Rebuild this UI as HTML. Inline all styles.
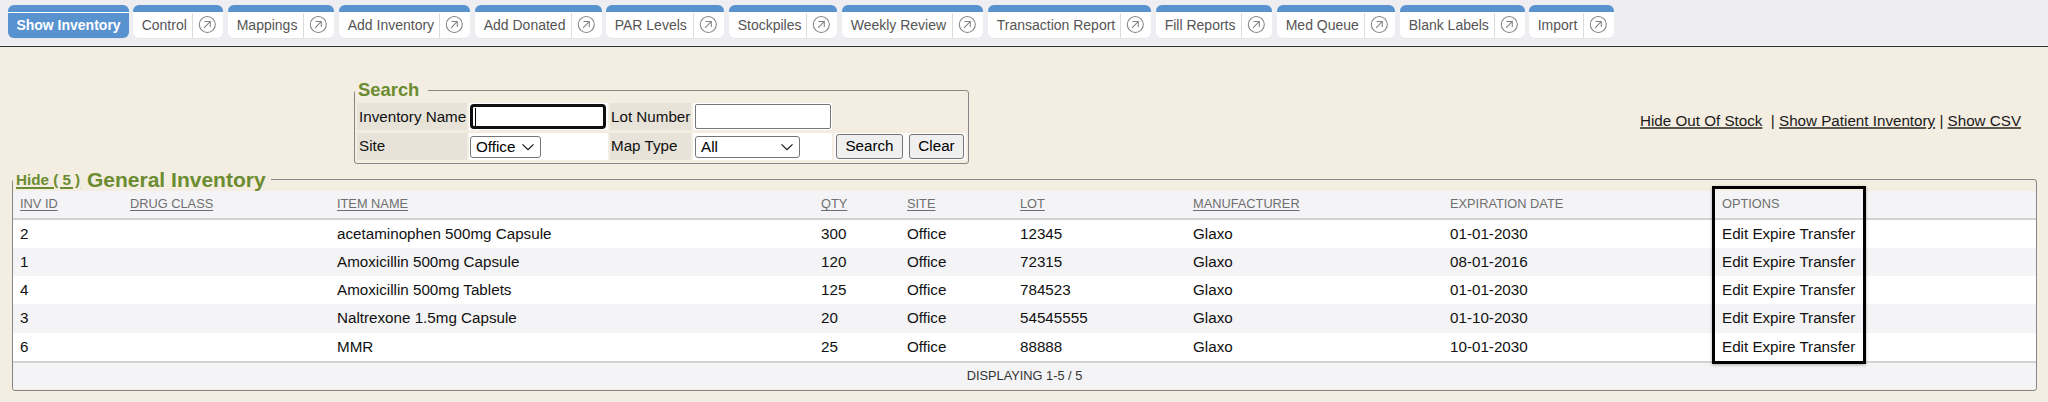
<!DOCTYPE html>
<html><head><meta charset="utf-8">
<style>
*{box-sizing:border-box;margin:0;padding:0}
html,body{width:2048px;height:402px;overflow:hidden}
body{background:#f4ede1;font-family:"Liberation Sans",sans-serif;position:relative;color:#222}
#hdr{position:absolute;left:0;top:0;width:2048px;height:46px;background:#eeedf2;border-bottom:1px solid #f5f4f8}
#hdrline{position:absolute;left:0;top:46px;width:2048px;height:1px;background:#333}
#tabs{position:absolute;left:0;top:0}
.tab{position:absolute;top:5px;height:33px;border-radius:6px;background:#fff;border-top:7px solid #5892cf;box-shadow:0 1px 1px rgba(0,0,0,0.04)}
.tab .tt{position:absolute;left:8.7px;top:0;font-size:14px;line-height:26px;color:#555;white-space:pre}
.tab .sep{position:absolute;right:30px;top:1px;width:1px;height:25px;background:#dcdcdc}
.tab .ic{position:absolute;right:0;top:0;display:block}
.tab.active{background:#5892cf}
.tab.active .tt{left:0;right:0;text-align:center;color:#fff;font-weight:bold;border-top:1px solid #fff;line-height:25px}
.fs{position:absolute;border:1px solid #878787;border-radius:3px}
.lg{position:absolute;background:#f4ede1;color:#6b8c30;font-weight:bold;white-space:pre;line-height:1}
.lab{position:absolute;background:#e7e3d9;font-size:15.2px;line-height:15px;padding-left:2px;white-space:pre;color:#111}
.wc{position:absolute;background:#fff}
.inp{position:absolute;background:#fff;border:1px solid #767676;border-radius:2px}
.sel{position:absolute;background:#fff;border:1px solid #767676;border-radius:3px;font-size:15.2px;line-height:15px;color:#000}
.btn{position:absolute;background:#efefef;border:1px solid #767676;border-radius:3px;font-size:15.2px;line-height:15px;color:#000;text-align:center}
.txt{position:absolute;white-space:pre;line-height:1}
.th{position:absolute;top:197px;font-size:12.8px;line-height:13px;color:#6f6f6f;white-space:pre}
.th.u{text-decoration:underline;text-underline-offset:2px;text-decoration-thickness:1.3px}
u{text-underline-offset:1px;text-decoration-thickness:2px;text-decoration-color:#5c5852}
.row{position:absolute;left:13px;width:2023px}
.cell{position:absolute;font-size:15.2px;line-height:15px;color:#111;white-space:pre}
</style></head><body>
<div id="hdr"></div><div id="hdrline"></div>
<div id="tabs">
<div class="tab active" style="left:8px;width:121px"><span class="tt">Show Inventory</span></div>
<div class="tab" style="left:133px;width:90px"><span class="tt">Control</span><span class="sep"></span><svg class="ic" width="30" height="26" viewBox="0 0 30 26"><circle cx="14.3" cy="12.45" r="8" fill="none" stroke="#838383" stroke-width="1.05"/><path d="M11 15.8 L17.2 9.6 M11.5 9.5 H17.3 V15.1" fill="none" stroke="#838383" stroke-width="1.05"/></svg></div>
<div class="tab" style="left:228px;width:106px"><span class="tt">Mappings</span><span class="sep"></span><svg class="ic" width="30" height="26" viewBox="0 0 30 26"><circle cx="14.3" cy="12.45" r="8" fill="none" stroke="#838383" stroke-width="1.05"/><path d="M11 15.8 L17.2 9.6 M11.5 9.5 H17.3 V15.1" fill="none" stroke="#838383" stroke-width="1.05"/></svg></div>
<div class="tab" style="left:339px;width:131px"><span class="tt">Add Inventory</span><span class="sep"></span><svg class="ic" width="30" height="26" viewBox="0 0 30 26"><circle cx="14.3" cy="12.45" r="8" fill="none" stroke="#838383" stroke-width="1.05"/><path d="M11 15.8 L17.2 9.6 M11.5 9.5 H17.3 V15.1" fill="none" stroke="#838383" stroke-width="1.05"/></svg></div>
<div class="tab" style="left:475px;width:127px"><span class="tt">Add Donated</span><span class="sep"></span><svg class="ic" width="30" height="26" viewBox="0 0 30 26"><circle cx="14.3" cy="12.45" r="8" fill="none" stroke="#838383" stroke-width="1.05"/><path d="M11 15.8 L17.2 9.6 M11.5 9.5 H17.3 V15.1" fill="none" stroke="#838383" stroke-width="1.05"/></svg></div>
<div class="tab" style="left:606px;width:118px"><span class="tt">PAR Levels</span><span class="sep"></span><svg class="ic" width="30" height="26" viewBox="0 0 30 26"><circle cx="14.3" cy="12.45" r="8" fill="none" stroke="#838383" stroke-width="1.05"/><path d="M11 15.8 L17.2 9.6 M11.5 9.5 H17.3 V15.1" fill="none" stroke="#838383" stroke-width="1.05"/></svg></div>
<div class="tab" style="left:729px;width:108px"><span class="tt">Stockpiles</span><span class="sep"></span><svg class="ic" width="30" height="26" viewBox="0 0 30 26"><circle cx="14.3" cy="12.45" r="8" fill="none" stroke="#838383" stroke-width="1.05"/><path d="M11 15.8 L17.2 9.6 M11.5 9.5 H17.3 V15.1" fill="none" stroke="#838383" stroke-width="1.05"/></svg></div>
<div class="tab" style="left:842px;width:141px"><span class="tt">Weekly Review</span><span class="sep"></span><svg class="ic" width="30" height="26" viewBox="0 0 30 26"><circle cx="14.3" cy="12.45" r="8" fill="none" stroke="#838383" stroke-width="1.05"/><path d="M11 15.8 L17.2 9.6 M11.5 9.5 H17.3 V15.1" fill="none" stroke="#838383" stroke-width="1.05"/></svg></div>
<div class="tab" style="left:988px;width:163px"><span class="tt">Transaction Report</span><span class="sep"></span><svg class="ic" width="30" height="26" viewBox="0 0 30 26"><circle cx="14.3" cy="12.45" r="8" fill="none" stroke="#838383" stroke-width="1.05"/><path d="M11 15.8 L17.2 9.6 M11.5 9.5 H17.3 V15.1" fill="none" stroke="#838383" stroke-width="1.05"/></svg></div>
<div class="tab" style="left:1156px;width:116px"><span class="tt">Fill Reports</span><span class="sep"></span><svg class="ic" width="30" height="26" viewBox="0 0 30 26"><circle cx="14.3" cy="12.45" r="8" fill="none" stroke="#838383" stroke-width="1.05"/><path d="M11 15.8 L17.2 9.6 M11.5 9.5 H17.3 V15.1" fill="none" stroke="#838383" stroke-width="1.05"/></svg></div>
<div class="tab" style="left:1277px;width:118px"><span class="tt">Med Queue</span><span class="sep"></span><svg class="ic" width="30" height="26" viewBox="0 0 30 26"><circle cx="14.3" cy="12.45" r="8" fill="none" stroke="#838383" stroke-width="1.05"/><path d="M11 15.8 L17.2 9.6 M11.5 9.5 H17.3 V15.1" fill="none" stroke="#838383" stroke-width="1.05"/></svg></div>
<div class="tab" style="left:1400px;width:125px"><span class="tt">Blank Labels</span><span class="sep"></span><svg class="ic" width="30" height="26" viewBox="0 0 30 26"><circle cx="14.3" cy="12.45" r="8" fill="none" stroke="#838383" stroke-width="1.05"/><path d="M11 15.8 L17.2 9.6 M11.5 9.5 H17.3 V15.1" fill="none" stroke="#838383" stroke-width="1.05"/></svg></div>
<div class="tab" style="left:1529px;width:85px"><span class="tt">Import</span><span class="sep"></span><svg class="ic" width="30" height="26" viewBox="0 0 30 26"><circle cx="14.3" cy="12.45" r="8" fill="none" stroke="#838383" stroke-width="1.05"/><path d="M11 15.8 L17.2 9.6 M11.5 9.5 H17.3 V15.1" fill="none" stroke="#838383" stroke-width="1.05"/></svg></div>
</div>

<div class="fs" style="left:354px;top:90px;width:615px;height:74px"></div>
<div class="lg" style="left:355px;top:81px;font-size:18.4px;padding:0 9px 0 3px">Search</div>
<div class="lab" style="left:357px;top:103px;width:110px;height:27px;padding-top:6px">Inventory Name</div>
<div class="wc" style="left:469px;top:103px;width:139px;height:27px"></div>
<div class="inp" style="left:470px;top:104px;width:136px;height:25px;border:3px solid #101010;border-radius:4px"></div>
<div style="position:absolute;left:475px;top:108px;width:1px;height:18px;background:#000"></div>
<div class="lab" style="left:610px;top:103px;width:81px;height:27px;padding-top:6px;padding-left:1px">Lot Number</div>
<div class="wc" style="left:693px;top:103px;width:139px;height:27px"></div>
<div class="inp" style="left:695px;top:104px;width:136px;height:25px"></div>
<div class="lab" style="left:357px;top:133px;width:110px;height:27px;padding-top:5px">Site</div>
<div class="wc" style="left:469px;top:133px;width:139px;height:27px"></div>
<div class="sel" style="left:470px;top:136px;width:71px;height:22px;padding:2px 0 0 5px">Office</div>
<svg style="position:absolute;left:521px;top:143px" width="14" height="9" viewBox="0 0 14 9"><path d="M1.5 1.3 L7 6.7 L12.5 1.3" fill="none" stroke="#111" stroke-width="1.15"/></svg>
<div class="lab" style="left:610px;top:133px;width:81px;height:27px;padding-top:5px;padding-left:1px">Map Type</div>
<div class="wc" style="left:693px;top:133px;width:139px;height:27px"></div>
<div class="sel" style="left:695px;top:136px;width:105px;height:22px;padding:2px 0 0 5px">All</div>
<svg style="position:absolute;left:780px;top:143px" width="14" height="9" viewBox="0 0 14 9"><path d="M1.5 1.3 L7 6.7 L12.5 1.3" fill="none" stroke="#111" stroke-width="1.15"/></svg>
<div class="wc" style="left:834px;top:133px;width:132px;height:27px;background:#fcfbf9"></div>
<div class="btn" style="left:836px;top:134px;width:67px;height:25px;padding-top:3px">Search</div>
<div class="btn" style="left:909px;top:134px;width:55px;height:25px;padding-top:3px">Clear</div>

<div class="txt" style="left:1640px;top:113px;font-size:15.2px;color:#1a1a1a"><u>Hide Out Of Stock</u>  | <u>Show Patient Inventory</u> | <u>Show CSV</u></div>

<div class="fs" style="left:12px;top:179px;width:2025px;height:212px"></div>
<div style="position:absolute;left:13px;top:176px;width:258px;height:8px;background:#f4ede1"></div>
<div class="lg" style="left:16px;top:172px;font-size:15.2px;text-decoration:underline;text-underline-offset:2px;text-decoration-thickness:1.6px;background:none">Hide ( 5 )</div>
<div class="lg" style="left:87px;top:169px;font-size:21px;background:none">General Inventory</div>
<div class="row" style="top:191px;height:27px;background:#f4f4f6"></div>
<div class="row" style="top:218px;height:2px;background:#d2d2d2"></div>
<div class="th u" style="left:20px">INV ID</div>
<div class="th u" style="left:130px">DRUG CLASS</div>
<div class="th u" style="left:337px">ITEM NAME</div>
<div class="th u" style="left:821px">QTY</div>
<div class="th u" style="left:907px">SITE</div>
<div class="th u" style="left:1020px">LOT</div>
<div class="th u" style="left:1193px">MANUFACTURER</div>
<div class="th" style="left:1450px">EXPIRATION DATE</div>
<div class="th" style="left:1722px">OPTIONS</div>

<div class="row" style="top:220px;height:28px;background:#ffffff"></div>
<div class="cell" style="left:20px;top:226px">2</div>
<div class="cell" style="left:337px;top:226px">acetaminophen 500mg Capsule</div>
<div class="cell" style="left:821px;top:226px">300</div>
<div class="cell" style="left:907px;top:226px">Office</div>
<div class="cell" style="left:1020px;top:226px">12345</div>
<div class="cell" style="left:1193px;top:226px">Glaxo</div>
<div class="cell" style="left:1450px;top:226px">01-01-2030</div>
<div class="cell" style="left:1722px;top:226px">Edit Expire Transfer</div>
<div class="row" style="top:248px;height:28px;background:#f4f4f6"></div>
<div class="cell" style="left:20px;top:254px">1</div>
<div class="cell" style="left:337px;top:254px">Amoxicillin 500mg Capsule</div>
<div class="cell" style="left:821px;top:254px">120</div>
<div class="cell" style="left:907px;top:254px">Office</div>
<div class="cell" style="left:1020px;top:254px">72315</div>
<div class="cell" style="left:1193px;top:254px">Glaxo</div>
<div class="cell" style="left:1450px;top:254px">08-01-2016</div>
<div class="cell" style="left:1722px;top:254px">Edit Expire Transfer</div>
<div class="row" style="top:276px;height:28.5px;background:#ffffff"></div>
<div class="cell" style="left:20px;top:282px">4</div>
<div class="cell" style="left:337px;top:282px">Amoxicillin 500mg Tablets</div>
<div class="cell" style="left:821px;top:282px">125</div>
<div class="cell" style="left:907px;top:282px">Office</div>
<div class="cell" style="left:1020px;top:282px">784523</div>
<div class="cell" style="left:1193px;top:282px">Glaxo</div>
<div class="cell" style="left:1450px;top:282px">01-01-2030</div>
<div class="cell" style="left:1722px;top:282px">Edit Expire Transfer</div>
<div class="row" style="top:304px;height:29px;background:#f4f4f6"></div>
<div class="cell" style="left:20px;top:310px">3</div>
<div class="cell" style="left:337px;top:310px">Naltrexone 1.5mg Capsule</div>
<div class="cell" style="left:821px;top:310px">20</div>
<div class="cell" style="left:907px;top:310px">Office</div>
<div class="cell" style="left:1020px;top:310px">54545555</div>
<div class="cell" style="left:1193px;top:310px">Glaxo</div>
<div class="cell" style="left:1450px;top:310px">01-10-2030</div>
<div class="cell" style="left:1722px;top:310px">Edit Expire Transfer</div>
<div class="row" style="top:333px;height:28px;background:#ffffff"></div>
<div class="cell" style="left:20px;top:339px">6</div>
<div class="cell" style="left:337px;top:339px">MMR</div>
<div class="cell" style="left:821px;top:339px">25</div>
<div class="cell" style="left:907px;top:339px">Office</div>
<div class="cell" style="left:1020px;top:339px">88888</div>
<div class="cell" style="left:1193px;top:339px">Glaxo</div>
<div class="cell" style="left:1450px;top:339px">10-01-2030</div>
<div class="cell" style="left:1722px;top:339px">Edit Expire Transfer</div>

<div class="row" style="top:361px;height:2px;background:#d2d2d2"></div>
<div class="row" style="top:363px;height:26px;background:#f4f4f6"></div>
<div class="txt" style="left:13px;width:2023px;text-align:center;top:370px;font-size:12.8px;color:#333">DISPLAYING 1-5 / 5</div>
<div style="position:absolute;left:1712px;top:186px;width:154px;height:178px;border:3px solid #000;box-shadow:0 1px 3px rgba(0,0,0,0.3)"></div>
</body></html>
